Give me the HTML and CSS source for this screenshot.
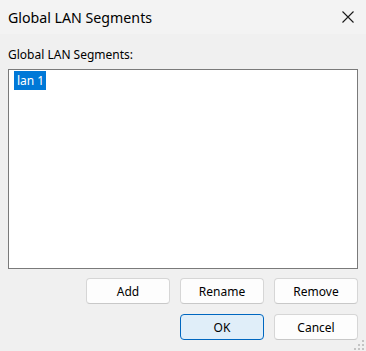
FILE: index.html
```html
<!DOCTYPE html>
<html>
<head>
<meta charset="utf-8">
<link rel="stylesheet" href="styles.css">
</head>
<body>
<div class="dialog">
  <div class="titlebar">
    <span class="title">Global LAN Segments</span>
    <svg class="close" width="12" height="12" viewBox="0 0 12 12"><path d="M0.5 0.5 L11.5 11.5 M11.5 0.5 L0.5 11.5" stroke="#1a1a1a" stroke-width="1.1" fill="none"/></svg>
  </div>
  <div class="content">
    <div class="label">Global LAN Segments:</div>
    <div class="listbox">
      <div class="item"><span class="sel">lan 1</span></div>
    </div>
    <div class="row row-actions">
      <button class="btn">Add</button>
      <button class="btn">Rename</button>
      <button class="btn">Remove</button>
    </div>
    <div class="row row-confirm">
      <button class="btn btn-default">OK</button>
      <button class="btn">Cancel</button>
    </div>
  </div>
  <svg class="grip" width="12" height="12" viewBox="0 0 12 12">
    <rect x="9" y="1" width="2" height="2" fill="#c4c4c4"/>
    <rect x="5" y="5" width="2" height="2" fill="#c4c4c4"/>
    <rect x="9" y="5" width="2" height="2" fill="#c4c4c4"/>
    <rect x="1" y="9" width="2" height="2" fill="#c4c4c4"/>
    <rect x="5" y="9" width="2" height="2" fill="#c4c4c4"/>
    <rect x="9" y="9" width="2" height="2" fill="#c4c4c4"/>
  </svg>
</div>
</body>
</html>
```
FILE: styles.css
```css
html, body {
  margin: 0;
  padding: 0;
}
body {
  width: 366px;
  height: 351px;
  overflow: hidden;
  background: #f0f0f0;
  font-family: "Segoe UI", "Noto Sans", "Liberation Sans", sans-serif;
  color: #000;
}
.dialog {
  position: relative;
  width: 366px;
  height: 351px;
  display: flex;
  flex-direction: column;
}
.titlebar {
  height: 34px;
  background: #f3f3f3;
  display: flex;
  align-items: center;
  justify-content: space-between;
  padding: 0 12px 0 8px;
  box-sizing: border-box;
}
.title {
  font-size: 14.2px;
  line-height: 20px;
  margin-top: 1px;
  color: #000;
}
.close {
  display: block;
}
.content {
  padding: 0 8px;
  display: flex;
  flex-direction: column;
}
.label {
  font-size: 12px;
  line-height: 16px;
  margin-top: 13px;
  height: 16px;
  color: #000;
}
.listbox {
  margin-top: 6px;
  height: 200px;
  box-sizing: border-box;
  border: 1px solid #7a7a7a;
  background: #fff;
  padding: 1px 0 0 5px;
}
.item {
  font-size: 12px;
  line-height: 19px;
  height: 19px;
}
.sel {
  display: inline-block;
  background: #0078d7;
  color: #fff;
  padding: 0 2px 0 3px;
  height: 19px;
  line-height: 19px;
}
.row {
  display: flex;
  justify-content: flex-end;
  gap: 10px;
}
.row-actions {
  margin-top: 9px;
}
.row-confirm {
  margin-top: 10px;
}
.btn {
  width: 84px;
  height: 26px;
  box-sizing: border-box;
  border: 1px solid #d6d6d6;
  border-bottom-color: #c8c8c8;
  border-radius: 4px;
  background: #fdfdfd;
  font-family: inherit;
  font-size: 12px;
  color: #000;
  padding: 0;
  margin: 0;
}
.btn-default {
  background: #e0eef9;
  border: 1px solid #0067c0;
}
.grip {
  position: absolute;
  right: 1px;
  bottom: 0;
}
```
